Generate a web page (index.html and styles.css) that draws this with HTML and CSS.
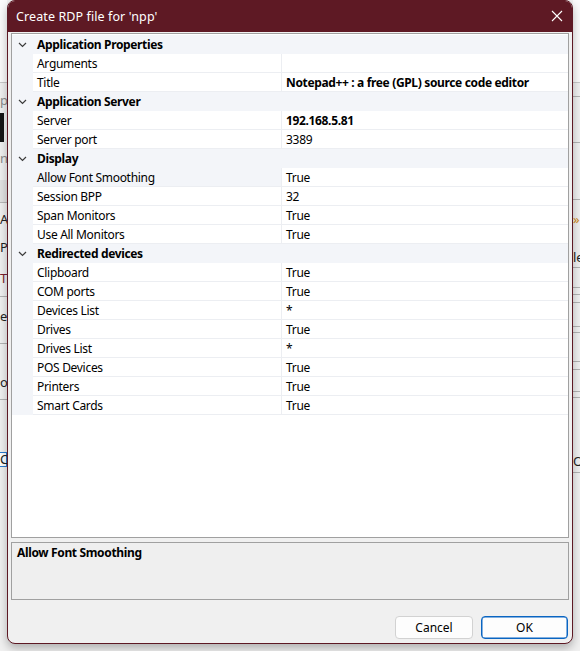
FILE: index.html
```html
<!DOCTYPE html>
<html lang="en">
<head>
<meta charset="utf-8">
<title>Create RDP file for 'npp'</title>
<link rel="stylesheet" href="styles.css">
</head>
<body>
<div class="backdrop">
  <div class="strip strip-left">
    <div class="bk-head"></div>
    <div class="bk-text lp1">pp</div>
    <div class="bk-bar"></div>
    <div class="bk-text lp2">npp</div>
    <div class="bk-band"></div>
    <div class="bk-text lp3 dark">All</div>
    <div class="bk-text lp4 dark">Path</div>
    <div class="bk-text lp5 maroon">Tr</div>
    <div class="bk-line lp6"></div>
    <div class="bk-text lp7 dark">er</div>
    <div class="bk-line lp8"></div>
    <div class="bk-text lp9 dark">o</div>
    <div class="bk-line lp10"></div>
    <div class="bk-box">Cr</div>
  </div>
  <div class="strip-mid"></div>
  <div class="strip strip-right">
    <div class="bk-head"></div>
    <div class="bk-line rp1"></div>
    <div class="bk-line rp2"></div>
    <div class="bk-line rp3"></div>
    <div class="bk-text rp4 orange">» A</div>
    <div class="bk-text rp5 dark">le</div>
    <div class="bk-line rp6"></div>
    <div class="bk-line rp7"></div>
    <div class="bk-line rp8"></div>
    <div class="bk-line rp9"></div>
    <div class="bk-line rp10"></div>
    <div class="bk-line rp11"></div>
    <div class="bk-line rp12"></div>
    <div class="bk-line rp13"></div>
    <div class="bk-line rp14"></div>
    <div class="bk-line rp15"></div>
    <div class="bk-text rp16 dark">OK</div>
    <div class="bk-line rp17"></div>
  </div>
</div>

<div class="dialog">
  <div class="titlebar">
    <span class="title">Create RDP file for 'npp'</span>
    <svg class="close" width="12" height="12" viewBox="0 0 12 12"><path d="M1 1 L11 11 M11 1 L1 11" stroke="#ffffff" stroke-width="1.1" fill="none"/></svg>
  </div>
  <div class="body">
    <div class="grid">
      <div class="row cat"><span class="gut"><svg width="9" height="6" viewBox="0 0 9 6"><path d="M1 1 L4.5 4.5 L8 1" stroke="#3c3c3c" stroke-width="1.2" fill="none"/></svg></span><span class="cat-name">Application Properties</span></div>
      <div class="row"><span class="gut"></span><span class="lbl">Arguments</span><span class="val"></span></div>
      <div class="row"><span class="gut"></span><span class="lbl">Title</span><span class="val bold">Notepad++ : a free (GPL) source code editor</span></div>
      <div class="row cat"><span class="gut"><svg width="9" height="6" viewBox="0 0 9 6"><path d="M1 1 L4.5 4.5 L8 1" stroke="#3c3c3c" stroke-width="1.2" fill="none"/></svg></span><span class="cat-name">Application Server</span></div>
      <div class="row"><span class="gut"></span><span class="lbl">Server</span><span class="val bold">192.168.5.81</span></div>
      <div class="row"><span class="gut"></span><span class="lbl">Server port</span><span class="val">3389</span></div>
      <div class="row cat"><span class="gut"><svg width="9" height="6" viewBox="0 0 9 6"><path d="M1 1 L4.5 4.5 L8 1" stroke="#3c3c3c" stroke-width="1.2" fill="none"/></svg></span><span class="cat-name">Display</span></div>
      <div class="row selected"><span class="gut"></span><span class="lbl">Allow Font Smoothing</span><span class="val">True</span></div>
      <div class="row"><span class="gut"></span><span class="lbl">Session BPP</span><span class="val">32</span></div>
      <div class="row"><span class="gut"></span><span class="lbl">Span Monitors</span><span class="val">True</span></div>
      <div class="row"><span class="gut"></span><span class="lbl">Use All Monitors</span><span class="val">True</span></div>
      <div class="row cat"><span class="gut"><svg width="9" height="6" viewBox="0 0 9 6"><path d="M1 1 L4.5 4.5 L8 1" stroke="#3c3c3c" stroke-width="1.2" fill="none"/></svg></span><span class="cat-name">Redirected devices</span></div>
      <div class="row"><span class="gut"></span><span class="lbl">Clipboard</span><span class="val">True</span></div>
      <div class="row"><span class="gut"></span><span class="lbl">COM ports</span><span class="val">True</span></div>
      <div class="row"><span class="gut"></span><span class="lbl">Devices List</span><span class="val">*</span></div>
      <div class="row"><span class="gut"></span><span class="lbl">Drives</span><span class="val">True</span></div>
      <div class="row"><span class="gut"></span><span class="lbl">Drives List</span><span class="val">*</span></div>
      <div class="row"><span class="gut"></span><span class="lbl">POS Devices</span><span class="val">True</span></div>
      <div class="row"><span class="gut"></span><span class="lbl">Printers</span><span class="val">True</span></div>
      <div class="row"><span class="gut"></span><span class="lbl">Smart Cards</span><span class="val">True</span></div>
    </div>
    <div class="desc"><span class="desc-title">Allow Font Smoothing</span></div>
    <div class="footer">
      <button class="btn cancel" type="button">Cancel</button>
      <button class="btn ok" type="button">OK</button>
    </div>
  </div>
</div>
</body>
</html>
```
FILE: styles.css
```css
* { box-sizing: border-box; }
html, body { margin: 0; padding: 0; }
body {
  width: 580px;
  height: 651px;
  overflow: hidden;
  background: #e9e9e9;
  font-family: "Noto Sans", "Segoe UI", sans-serif;
  font-size: 12px;
  color: #000;
  position: relative;
}

/* ---------- backdrop window ---------- */
.backdrop {
  display: flex;
  height: 651px;
  background: #f0f0f0;
}
.strip {
  width: 7px;
  overflow: hidden;
  display: flex;
  flex-direction: column;
  background: #f0f0f0;
}
.strip-mid { flex: 1; }
.bk-head {
  height: 83px;
  flex: none;
  background: #fbfbfb;
  border-bottom: 1px solid #c9c9c9;
}
.bk-text {
  flex: none;
  height: 16px;
  line-height: 16px;
  font-size: 13px;
  white-space: nowrap;
  color: #8a8a8a;
}
.bk-text.dark { color: #222; }
.bk-text.maroon { color: #7a1f2c; }
.bk-text.orange { color: #d08a20; }
.bk-line {
  flex: none;
  height: 1px;
  background: #b3b3b3;
}
.bk-bar {
  flex: none;
  width: 4px;
  height: 29px;
  margin-top: 5px;
  background: #151515;
}
.bk-band {
  flex: none;
  height: 23px;
  margin-top: 14px;
  background: #e2e2e2;
  border-bottom: 1px solid #b8b8b8;
}
.bk-box {
  flex: none;
  margin-top: 52px;
  height: 15px;
  line-height: 13px;
  border: 1px solid #2b7bd0;
  border-left: none;
  background: #fff;
  font-size: 13px;
  white-space: nowrap;
  color: #222;
}
.lp1 { margin-top: 9px; }
.lp2 { margin-top: 8px; }
.lp3 { margin-top: 8px; }
.lp4 { margin-top: 12px; }
.lp5 { margin-top: 15px; }
.lp6 { margin-top: 10px; }
.lp7 { margin-top: 11px; }
.lp8 { margin-top: 19px; }
.lp9 { margin-top: 30px; }
.lp10 { margin-top: 9px; }

.rp1 { margin-top: 13px; }
.rp2 { margin-top: 45px; }
.rp3 { margin-top: 56px; }
.rp4 { margin-top: 11px; }
.rp5 { margin-top: 22px; }
.rp6 { margin-top: 2px; }
.rp7 { margin-top: 19px; }
.rp8 { margin-top: 6px; }
.rp9 { margin-top: 7px; }
.rp10 { margin-top: 23px; }
.rp11 { margin-top: 5px; }
.rp12 { margin-top: 28px; }
.rp13 { margin-top: 7px; }
.rp14 { margin-top: 21px; }
.rp15 { margin-top: 5px; }
.rp16 { margin-top: 55px; }
.rp17 { margin-top: 3px; }

/* ---------- dialog ---------- */
.dialog {
  position: absolute;
  left: 7px;
  top: 0;
  width: 566px;
  height: 644px;
  border: 1px solid #5e1924;
  border-radius: 8px;
  background: #f0f0f0;
  box-shadow: 0 4px 10px rgba(0, 0, 0, 0.28);
  display: flex;
  flex-direction: column;
  overflow: hidden;
}
.titlebar {
  height: 31px;
  flex: none;
  background: #5e1924;
  color: #fff;
  display: flex;
  align-items: center;
  justify-content: space-between;
  padding: 0 9px 0 8px;
}
.title {
  font-size: 12.5px;
  letter-spacing: 0.1px;
}
.close { display: block; margin-top: -2px; }

.body {
  flex: 1;
  display: flex;
  flex-direction: column;
  padding: 1px 3px 4px 3px;
}
.grid {
  height: 505px;
  flex: none;
  border: 1px solid #a0a0a0;
  background: #fff;
  padding-top: 1px;
  letter-spacing: -0.3px;
}
.row {
  display: grid;
  grid-template-columns: 21px 249px 1fr;
  height: 19px;
  line-height: 20px;
  white-space: nowrap;
}
.gut {
  background: #f3f5f9;
  display: flex;
  align-items: center;
  justify-content: center;
}
.gut svg { display: block; margin-top: 1px; margin-left: -1px; }
.lbl {
  padding-left: 4px;
  border-right: 1px solid #eceef2;
  border-bottom: 1px solid #eceef2;
  overflow: hidden;
}
.val {
  padding-left: 4px;
  border-bottom: 1px solid #eceef2;
  overflow: hidden;
}
.bold { font-weight: 700; letter-spacing: -0.35px; }
.row.cat {
  background: #f3f5f9;
}
.cat-name {
  grid-column: 2 / 4;
  padding-left: 4px;
  font-weight: 700;
  letter-spacing: -0.35px;
  overflow: hidden;
}
.row.selected .lbl { background: #f3f5f9; }

.desc {
  margin-top: 4px;
  height: 58px;
  flex: none;
  border: 1px solid #a0a0a0;
  background: #efefef;
  padding: 1px 5px;
}
.desc-title { font-weight: 700; letter-spacing: -0.35px; }

.footer {
  margin-top: 16px;
  display: flex;
  justify-content: flex-end;
  gap: 8px;
  padding-right: 1px;
}
.btn {
  height: 23px;
  font-family: "Noto Sans", "Segoe UI", sans-serif;
  font-size: 12px;
  color: #000;
  background: #fdfdfd;
  border-radius: 4px;
  padding: 0;
  line-height: 20px;
}
.cancel {
  width: 78px;
  border: 1px solid #d2d2d2;
}
.ok {
  width: 87px;
  border: 1px solid #0a65c2;
  box-shadow: inset 0 0 0 0.5px #0a65c2;
}
```
